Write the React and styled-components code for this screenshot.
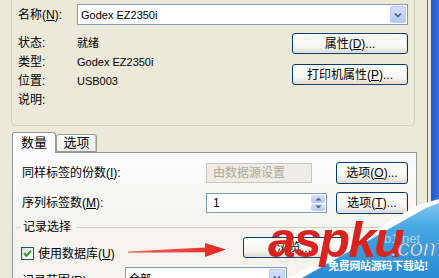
import React from 'react';
import styled, { createGlobalStyle } from 'styled-components';

const GlobalStyle = createGlobalStyle`
  html, body { margin: 0; padding: 0; background: #ECE9D8; }
  body {
    font-family: "Liberation Sans", "Noto Sans CJK SC", sans-serif;
    font-size: 12px;
    color: #000;
  }
`;

const Window = styled.div`
  position: relative;
  width: 439px;
  height: 278px;
  overflow: hidden;
  display: flex;
  background: #ECE9D8;
`;

const Dialog = styled.div`
  width: 427px;
  padding-left: 11px;
  box-sizing: border-box;
  display: flex;
  flex-direction: column;
  & > * { flex-shrink: 0; }
`;

// right window edge: dark line, gap, XP blue frame
const Frame = styled.div`
  width: 12px;
  border-left: 1px solid #6F6E66;
  box-sizing: border-box;
  display: flex;
  justify-content: flex-end;
  &::after {
    content: '';
    width: 8px;
    background: linear-gradient(90deg, #2456C8, #3A6FE0);
  }
`;

const GroupBox = styled.div`
  margin-top: -10px;
  width: 404px;
  height: 136px;
  box-sizing: border-box;
  border: 1px solid #D0D0BF;
  border-radius: 4px;
  padding: 13px 6px 0 6px;
`;

const NameRow = styled.div`
  display: flex;
  align-items: center;
  height: 21px;
`;

const FieldLabel = styled.span`
  width: ${p => p.$w || 59}px;
  flex: none;
  line-height: 14px;
  white-space: nowrap;
`;

const Mn = styled.span`
  text-decoration: underline;
`;

const Combo = styled.div`
  position: relative;
  width: ${p => p.$w}px;
  height: 21px;
  box-sizing: border-box;
  border: 1px solid #7F9DB9;
  background: #fff;
  display: flex;
  align-items: center;
  padding-left: 3px;
  font-size: 11px;
`;

const DropBtn = styled.div`
  position: absolute;
  right: 1px;
  top: 1px;
  bottom: 1px;
  width: 16px;
  border-radius: 2px;
  background: linear-gradient(#D4DFFB, #B4C7F4);
  border: 1px solid #B9CCF5;
  box-sizing: border-box;
  display: flex;
  align-items: center;
  justify-content: center;
`;

const InfoArea = styled.div`
  display: flex;
  margin-top: 8px;
`;

const InfoList = styled.div`
  flex: 1;
  display: flex;
  flex-direction: column;
`;

const InfoRow = styled.div`
  display: flex;
  align-items: center;
  height: 19px;
`;

const InfoValue = styled.span`
  font-size: 11px;
  line-height: 14px;
`;

const ButtonCol = styled.div`
  width: 116px;
  display: flex;
  flex-direction: column;
  gap: 10px;
`;

const XPButton = styled.button`
  width: ${p => p.$w}px;
  height: ${p => p.$h || 21}px;
  padding: 0;
  border: 1px solid #003C74;
  border-radius: 3px;
  background: linear-gradient(#FFFFFF, #F5F4EF 70%, #DCD8CC);
  font-family: inherit;
  font-size: 12px;
  line-height: 14px;
  color: #000;
  text-align: center;
  box-shadow: inset -1px -1px 0 #E3E0D5;
`;

const TabBar = styled.div`
  display: flex;
  align-items: flex-end;
  height: 19px;
  margin-top: 7px;
  margin-left: 1px;
`;

const Tab = styled.div`
  position: relative;
  z-index: ${p => (p.$active ? 2 : 1)};
  width: ${p => p.$w}px;
  height: ${p => (p.$active ? 21 : 18)}px;
  margin-bottom: ${p => (p.$active ? -1 : 0)}px;
  box-sizing: border-box;
  border: 1px solid #919B9C;
  border-bottom: ${p => (p.$active ? 'none' : '1px solid #919B9C')};
  border-radius: 3px 3px 0 0;
  background: ${p => (p.$active ? '#FCFCFE' : 'linear-gradient(#FFFFFF, #ECEBE5)')};
  box-shadow: ${p => (p.$active ? 'none' : 'inset -1px 0 0 #C5C2B8')};
  display: flex;
  align-items: center;
  justify-content: center;
  font-size: 13px;
  line-height: 14px;
`;

const Panel = styled.div`
  width: 405px;
  height: 140px;
  margin-left: 1px;
  box-sizing: border-box;
  border: 1px solid #919B9C;
  border-bottom: none;
  background: linear-gradient(#FCFCFE, #F4F3EE 60%);
  padding: 9px 0 0 9px;
  display: flex;
  flex-direction: column;
`;

const FormRow = styled.div`
  display: grid;
  grid-template-columns: 184px 130px 72px;
  align-items: center;
  height: 21px;
  margin-bottom: 9px;
`;

const TextBox = styled.div`
  position: relative;
  width: ${p => p.$w}px;
  height: 20px;
  box-sizing: border-box;
  border: 1px solid ${p => (p.$disabled ? '#C9C7BA' : '#7F9DB9')};
  background: ${p => (p.$disabled ? '#EEEDE5' : '#fff')};
  color: ${p => (p.$disabled ? '#ACA899' : '#000')};
  display: flex;
  align-items: center;
  padding-left: 6px;
  line-height: 14px;
`;

const Spin = styled.div`
  position: absolute;
  right: 1px;
  top: 1px;
  bottom: 1px;
  width: 14px;
  display: flex;
  flex-direction: column;
  gap: 1px;
`;

const SpinBtn = styled.div`
  flex: 1;
  border-radius: 2px;
  background: linear-gradient(#D4DFFB, #B4C7F4);
  display: flex;
  align-items: center;
  justify-content: center;
`;

const Separator = styled.div`
  display: flex;
  align-items: center;
  height: 14px;
  margin-top: -2px;
  margin-left: -6px;
  width: 396px;
  &::before {
    content: '';
    width: 4px;
    border-top: 1px solid #D0D0BF;
  }
  &::after {
    content: '';
    flex: 1;
    border-top: 1px solid #D0D0BF;
  }
`;

const SepText = styled.span`
  padding: 0 5px 0 3px;
  line-height: 14px;
`;

const CheckRow = styled.div`
  display: flex;
  align-items: center;
  height: 21px;
  margin-top: 9px;
`;

const CheckArea = styled.label`
  display: flex;
  align-items: center;
  width: 222px;
  margin-left: -1px;
  line-height: 14px;
`;

const CheckBox = styled.span`
  width: 13px;
  height: 13px;
  box-sizing: border-box;
  border: 1px solid #1C5180;
  background: linear-gradient(135deg, #DCDCD7, #FFFFFF);
  margin-right: 4px;
  display: flex;
  align-items: center;
  justify-content: center;
`;

const RaisedButton = styled(XPButton)`
  align-self: flex-start;
  margin-top: -6px;
`;

const RangeRow = styled.div`
  display: flex;
  align-items: flex-start;
  margin-top: 3px;
`;

const RangeLabel = styled.span`
  width: 103px;
  padding-top: 7px;
  line-height: 14px;
`;

const ArrowSvg = styled.svg`
  position: absolute;
  left: 126px;
  top: 241px;
`;

const Watermark = styled.div`
  position: absolute;
  left: 280px;
  top: 195px;
  width: 159px;
  height: 83px;
`;

const BrandText = styled.span`
  position: absolute;
  left: -12px;
  top: 20px;
  font-family: "Liberation Sans", sans-serif;
  font-weight: 700;
  font-style: italic;
  font-size: 50px;
  line-height: 50px;
  letter-spacing: -2px;
  color: #D9231F;
`;

const ComText = styled.span`
  position: absolute;
  left: 111px;
  top: 41px;
  font-family: "Liberation Sans", sans-serif;
  font-style: italic;
  font-size: 24px;
  line-height: 24px;
  color: #E6F0FA;
  -webkit-text-stroke: 0.6px #4C7DAE;
`;

const NetText = styled.span`
  position: absolute;
  left: 104px;
  top: 37px;
  font-family: "Liberation Sans", sans-serif;
  font-size: 13px;
  line-height: 13px;
  color: rgba(255, 255, 255, 0.55);
`;

const SloganText = styled.span`
  position: absolute;
  left: 48px;
  top: 64px;
  font-family: "Noto Sans CJK SC", sans-serif;
  font-size: 11px;
  line-height: 13px;
  font-weight: 700;
  color: #fff;
  white-space: nowrap;
  letter-spacing: -0.3px;
`;

const Chevron = () => (
  <svg width="8" height="6" viewBox="0 0 8 6">
    <path d="M1 1.5 L4 4.5 L7 1.5" fill="none" stroke="#4D6185" strokeWidth="1.6" />
  </svg>
);

const SpinArrow = ({ up }) => (
  <svg width="7" height="4" viewBox="0 0 7 4">
    <path d={up ? 'M0.5 3.5 L3.5 0.5 L6.5 3.5 Z' : 'M0.5 0.5 L3.5 3.5 L6.5 0.5 Z'} fill="#4D6185" />
  </svg>
);

const info = [
  ['状态:', '就绪'],
  ['类型:', 'Godex EZ2350i'],
  ['位置:', 'USB003'],
  ['说明:', ''],
];

export default function App() {
  return (
    <Window>
      <GlobalStyle />
      <Dialog>
        <GroupBox>
          <NameRow>
            <FieldLabel>名称(<Mn>N</Mn>):</FieldLabel>
            <Combo $w={331}>
              Godex EZ2350i
              <DropBtn><Chevron /></DropBtn>
            </Combo>
          </NameRow>
          <InfoArea>
            <InfoList>
              {info.map(([k, v]) => (
                <InfoRow key={k}>
                  <FieldLabel>{k}</FieldLabel>
                  <InfoValue>{v}</InfoValue>
                </InfoRow>
              ))}
            </InfoList>
            <ButtonCol>
              <XPButton $w={116}>属性(<Mn>D</Mn>)...</XPButton>
              <XPButton $w={116}>打印机属性(<Mn>P</Mn>)...</XPButton>
            </ButtonCol>
          </InfoArea>
        </GroupBox>

        <TabBar>
          <Tab $active $w={44}>数量</Tab>
          <Tab $w={41}>选项</Tab>
        </TabBar>
        <Panel>
          <FormRow>
            <FieldLabel $w={184}>同样标签的份数(<Mn>I</Mn>):</FieldLabel>
            <TextBox $w={106} $disabled>由数据源设置</TextBox>
            <XPButton $w={72} $h={22}>选项(<Mn>O</Mn>)...</XPButton>
          </FormRow>
          <FormRow>
            <FieldLabel $w={184}>序列标签数(<Mn>M</Mn>):</FieldLabel>
            <TextBox $w={121}>
              1
              <Spin>
                <SpinBtn><SpinArrow up /></SpinBtn>
                <SpinBtn><SpinArrow /></SpinBtn>
              </Spin>
            </TextBox>
            <XPButton $w={72} $h={22}>选项(<Mn>T</Mn>)...</XPButton>
          </FormRow>
          <Separator><SepText>记录选择</SepText></Separator>
          <CheckRow>
            <CheckArea>
              <CheckBox>
                <svg width="9" height="9" viewBox="0 0 9 9">
                  <path d="M1 4.2 L3.5 6.8 L8 1.8" fill="none" stroke="#21A121" strokeWidth="2" />
                </svg>
              </CheckBox>
              使用数据库(<Mn>U</Mn>)
            </CheckArea>
            <RaisedButton $w={102}>浏览...</RaisedButton>
          </CheckRow>
          <RangeRow>
            <RangeLabel>记录范围(<Mn>R</Mn>):</RangeLabel>
            <Combo $w={162}>
              全部
              <DropBtn><Chevron /></DropBtn>
            </Combo>
          </RangeRow>
        </Panel>
      </Dialog>
      <Frame />

      <ArrowSvg width="102" height="18" viewBox="0 0 102 18">
        <defs>
          <linearGradient id="arrowFill" x1="0" x2="1" y1="0" y2="0">
            <stop offset="0" stopColor="#F06A5E" />
            <stop offset="1" stopColor="#E3261F" />
          </linearGradient>
        </defs>
        <polygon
          points="2,10.6 79,6.6 79,2 100,8.5 79,16 79,11.2 2,11.8"
          fill="url(#arrowFill)"
        />
      </ArrowSvg>

      <Watermark>
        <svg width="159" height="83" viewBox="0 0 159 83" style={{ position: 'absolute', left: 0, top: 0 }}>
          <defs>
            <linearGradient id="wmBlue" x1="0" x2="0" y1="0" y2="1">
              <stop offset="0" stopColor="#7CC6EE" />
              <stop offset="0.35" stopColor="#45A6E2" />
              <stop offset="1" stopColor="#2A8BD4" />
            </linearGradient>
          </defs>
          <polygon points="10,83 138,10 159,4 159,83" fill="#FFFFFF" />
          <polygon points="22,83 146,13 159,8 159,83" fill="url(#wmBlue)" />
        </svg>
        <NetText>b1.net</NetText>
        <BrandText>aspku</BrandText>
        <ComText>.com</ComText>
        <SloganText>免费网站源码下载站!</SloganText>
      </Watermark>
    </Window>
  );
}
